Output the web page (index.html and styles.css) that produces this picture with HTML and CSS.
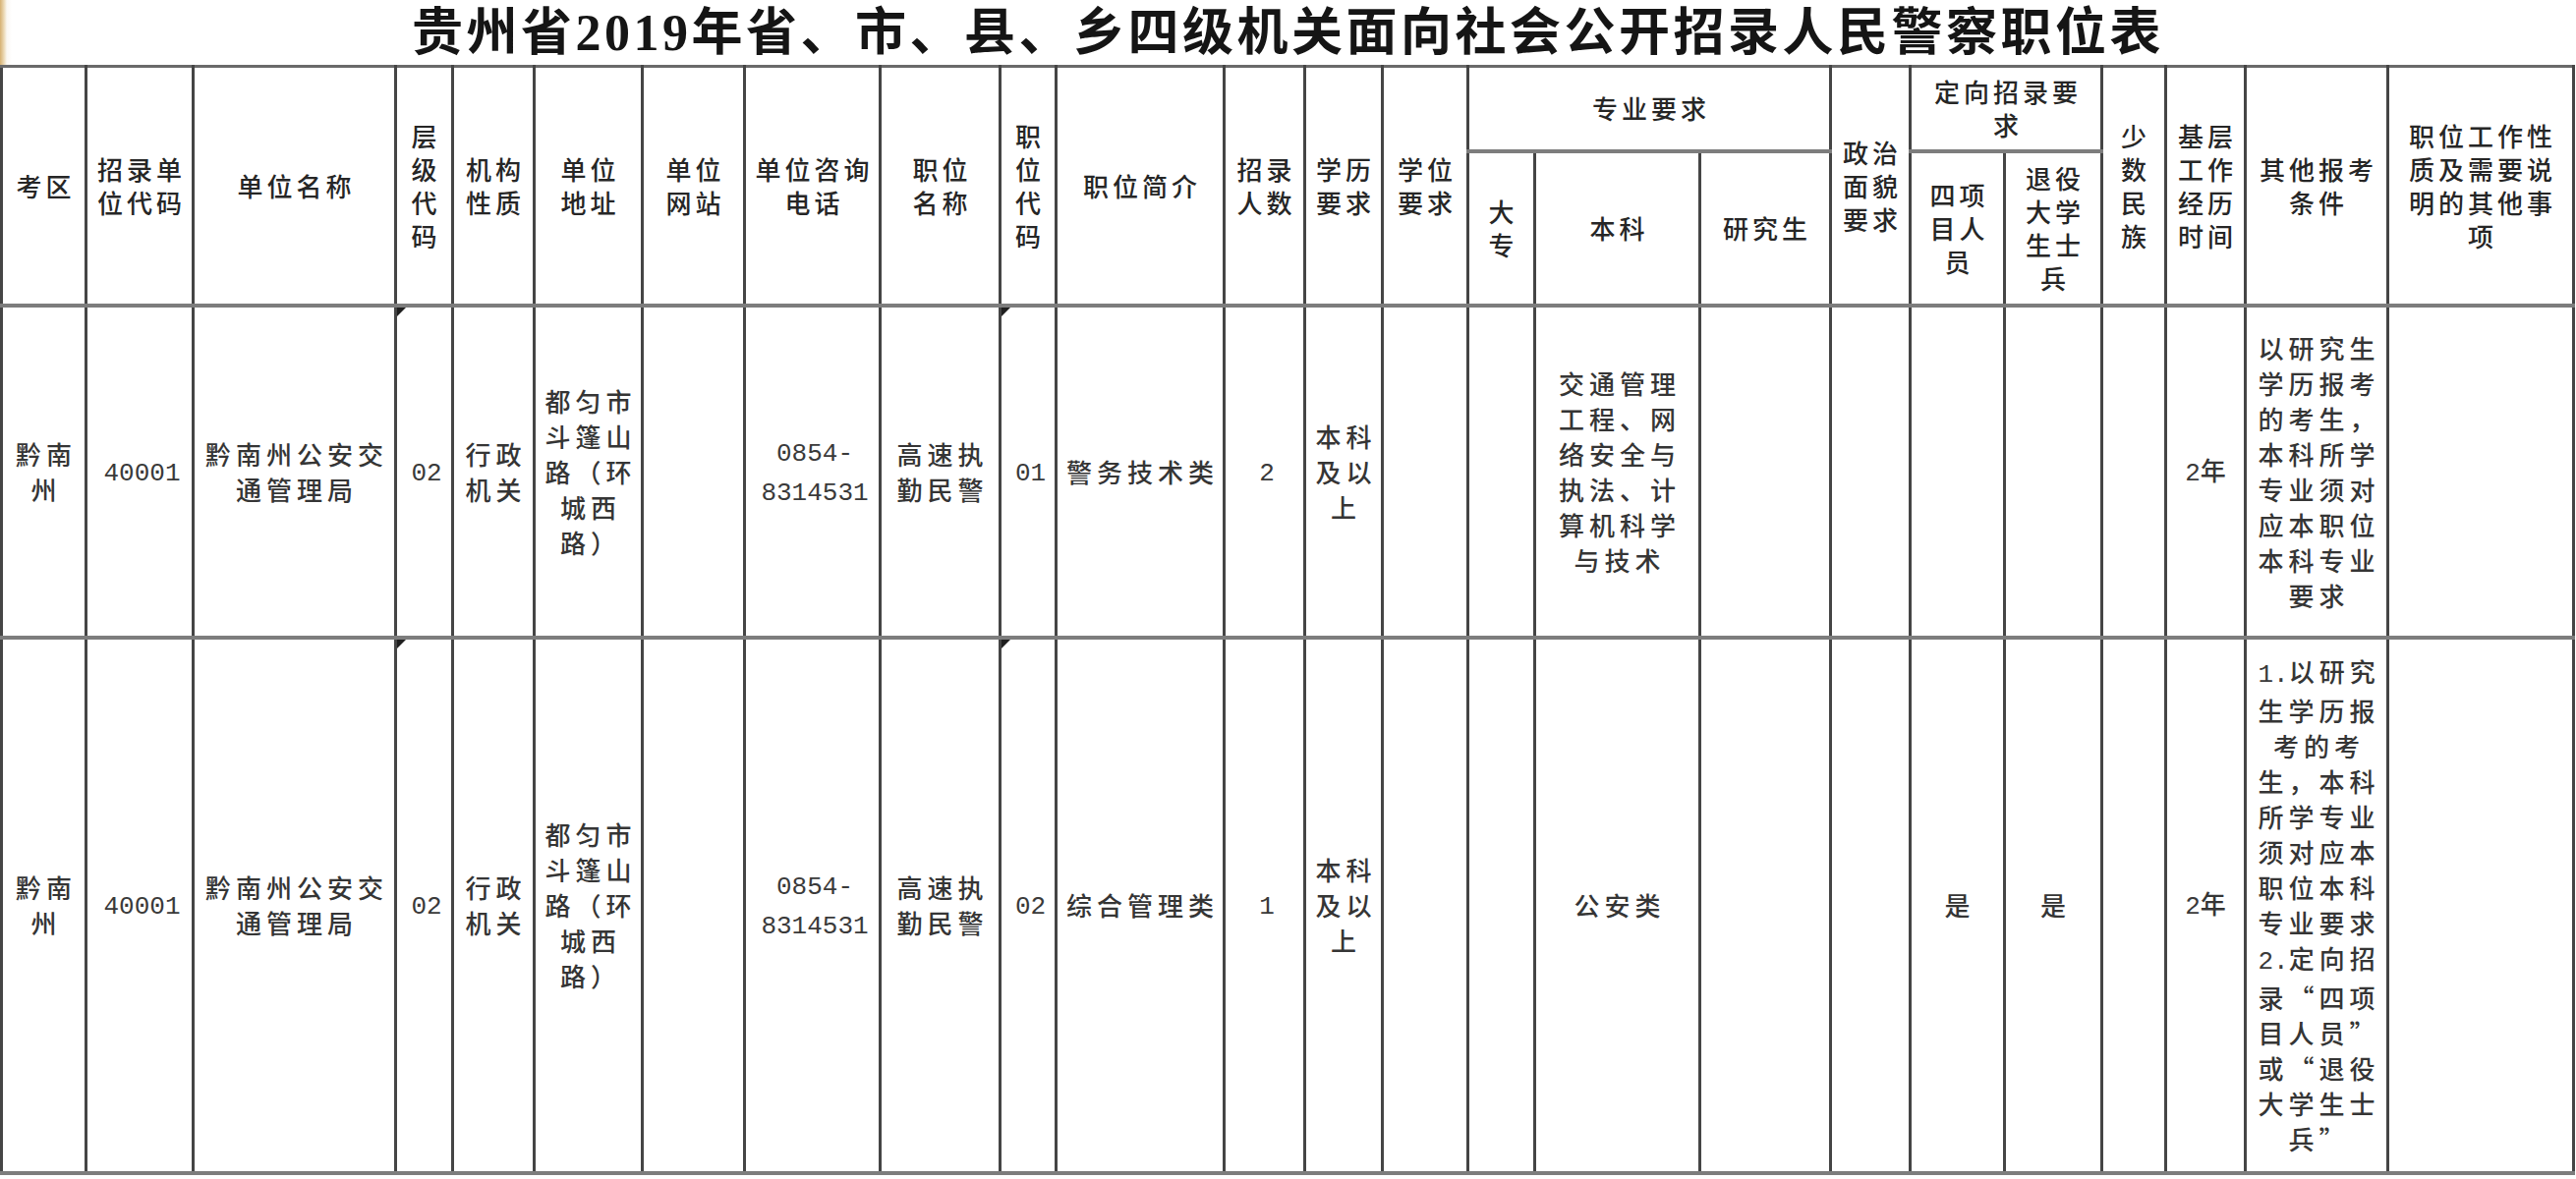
FILE: index.html
```html
<!DOCTYPE html>
<html lang="zh-CN">
<head>
<meta charset="utf-8">
<title>贵州省2019年省、市、县、乡四级机关面向社会公开招录人民警察职位表</title>
<link rel="stylesheet" href="styles.css">
</head>
<body>
<div class="title">贵州省2019年省、市、县、乡四级机关面向社会公开招录人民警察职位表</div>
<table class="sheet">
  <colgroup>
    <col><col><col><col><col><col><col><col><col><col><col><col>
    <col><col><col><col><col><col><col><col><col><col><col><col>
  </colgroup>
  <thead>
    <tr class="h1">
      <th rowspan="2">考区</th>
      <th rowspan="2">招录单<br>位代码</th>
      <th rowspan="2">单位名称</th>
      <th rowspan="2">层<br>级<br>代<br>码</th>
      <th rowspan="2">机构<br>性质</th>
      <th rowspan="2">单位<br>地址</th>
      <th rowspan="2">单位<br>网站</th>
      <th rowspan="2">单位咨询<br>电话</th>
      <th rowspan="2">职位<br>名称</th>
      <th rowspan="2">职<br>位<br>代<br>码</th>
      <th rowspan="2">职位简介</th>
      <th rowspan="2">招录<br>人数</th>
      <th rowspan="2">学历<br>要求</th>
      <th rowspan="2">学位<br>要求</th>
      <th colspan="3">专业要求</th>
      <th rowspan="2">政治<br>面貌<br>要求</th>
      <th colspan="2">定向招录要<br>求</th>
      <th rowspan="2">少<br>数<br>民<br>族</th>
      <th rowspan="2">基层<br>工作<br>经历<br>时间</th>
      <th rowspan="2">其他报考<br>条件</th>
      <th rowspan="2">职位工作性<br>质及需要说<br>明的其他事<br>项</th>
    </tr>
    <tr class="h2">
      <th>大<br>专</th>
      <th>本科</th>
      <th>研究生</th>
      <th>四项<br>目人<br>员</th>
      <th>退役<br>大学<br>生士<br>兵</th>
    </tr>
  </thead>
  <tbody>
    <tr class="r1">
      <td>黔南<br>州</td>
      <td><span class="num">40001</span></td>
      <td>黔南州公安交<br>通管理局</td>
      <td class="flag"><span class="num">02</span></td>
      <td>行政<br>机关</td>
      <td>都匀市<br>斗篷山<br>路（环<br>城西<br>路）</td>
      <td></td>
      <td><span class="num">0854-<br>8314531</span></td>
      <td>高速执<br>勤民警</td>
      <td class="flag"><span class="num">01</span></td>
      <td>警务技术类</td>
      <td><span class="num">2</span></td>
      <td>本科<br>及以<br>上</td>
      <td></td>
      <td></td>
      <td>交通管理<br>工程、网<br>络安全与<br>执法、计<br>算机科学<br>与技术</td>
      <td></td>
      <td></td>
      <td></td>
      <td></td>
      <td></td>
      <td><span class="num">2</span>年</td>
      <td>以研究生<br>学历报考<br>的考生，<br>本科所学<br>专业须对<br>应本职位<br>本科专业<br>要求</td>
      <td></td>
    </tr>
    <tr class="r2">
      <td>黔南<br>州</td>
      <td><span class="num">40001</span></td>
      <td>黔南州公安交<br>通管理局</td>
      <td class="flag"><span class="num">02</span></td>
      <td>行政<br>机关</td>
      <td>都匀市<br>斗篷山<br>路（环<br>城西<br>路）</td>
      <td></td>
      <td><span class="num">0854-<br>8314531</span></td>
      <td>高速执<br>勤民警</td>
      <td class="flag"><span class="num">02</span></td>
      <td>综合管理类</td>
      <td><span class="num">1</span></td>
      <td>本科<br>及以<br>上</td>
      <td></td>
      <td></td>
      <td>公安类</td>
      <td></td>
      <td></td>
      <td>是</td>
      <td>是</td>
      <td></td>
      <td><span class="num">2</span>年</td>
      <td><span class="num">1.</span>以研究<br>生学历报<br>考的考<br>生，本科<br>所学专业<br>须对应本<br>职位本科<br>专业要求<br><span class="num">2.</span>定向招<br>录“四项<br>目人员”<br>或“退役<br>大学生士<br>兵”</td>
      <td></td>
    </tr>
  </tbody>
</table>
</body>
</html>
```

FILE: styles.css
```css
html, body {
  margin: 0;
  padding: 0;
  background: #ffffff;
}

body {
  width: 2621px;
  height: 1200px;
  overflow: hidden;
  font-family: "Noto Sans CJK SC", sans-serif;
  color: #2a2a2a;
}

.title {
  box-sizing: border-box;
  height: 66px;
  padding-top: 2px;
  line-height: 64px;
  text-align: center;
  font-family: "Liberation Serif", "Noto Sans CJK SC", serif;
  font-weight: 700;
  font-size: 52px;
  letter-spacing: 3.5px;
  color: #151515;
  white-space: nowrap;
  background: linear-gradient(to right, #d6b172 0, #ecd9b4 4px, #fbf8f2 7px, #ffffff 12px);
}

.sheet {
  border-collapse: collapse;
  table-layout: fixed;
  width: 2617px;
  border-left: 2px solid #c9ced3;
}

.sheet col:nth-child(1)  { width: 86px; }
.sheet col:nth-child(2)  { width: 109px; }
.sheet col:nth-child(3)  { width: 206px; }
.sheet col:nth-child(4)  { width: 58px; }
.sheet col:nth-child(5)  { width: 83px; }
.sheet col:nth-child(6)  { width: 110px; }
.sheet col:nth-child(7)  { width: 104px; }
.sheet col:nth-child(8)  { width: 138px; }
.sheet col:nth-child(9)  { width: 122px; }
.sheet col:nth-child(10) { width: 57px; }
.sheet col:nth-child(11) { width: 171px; }
.sheet col:nth-child(12) { width: 82px; }
.sheet col:nth-child(13) { width: 79px; }
.sheet col:nth-child(14) { width: 87px; }
.sheet col:nth-child(15) { width: 68px; }
.sheet col:nth-child(16) { width: 168px; }
.sheet col:nth-child(17) { width: 133px; }
.sheet col:nth-child(18) { width: 81px; }
.sheet col:nth-child(19) { width: 96px; }
.sheet col:nth-child(20) { width: 99px; }
.sheet col:nth-child(21) { width: 65px; }
.sheet col:nth-child(22) { width: 81px; }
.sheet col:nth-child(23) { width: 145px; }
.sheet col:nth-child(24) { width: 189px; }

.sheet th,
.sheet td {
  padding: 0 0 0 4px;
  text-align: center;
  vertical-align: middle;
  white-space: nowrap;
  overflow: hidden;
  border-left: 3px solid #454545;
  border-right: 3px solid #454545;
  border-top: 4px solid #7d7d7d;
  border-bottom: 4px solid #7d7d7d;
  font-size: 26px;
}

.sheet th {
  font-weight: 500;
  line-height: 34px;
  letter-spacing: 4px;
  color: #262626;
}

.sheet td {
  font-weight: 500;
  line-height: 36px;
  letter-spacing: 5px;
  color: #353535;
  padding-left: 5px;
}

.sheet thead tr:first-child th {
  border-top: 3px solid #6a6a6a;
}

.h1 { height: 86px; }
.h2 { height: 157px; }
.r1 { height: 338px; }
.r2 { height: 545px; }

.num {
  font-family: "Liberation Mono", monospace;
  font-weight: 400;
  letter-spacing: 0;
  color: #3a3a3a;
}

.flag {
  position: relative;
}

.flag::before {
  content: "";
  position: absolute;
  top: 0;
  left: 0;
  width: 0;
  height: 0;
  border-top: 9px solid #1f1f1f;
  border-right: 9px solid transparent;
}
```
